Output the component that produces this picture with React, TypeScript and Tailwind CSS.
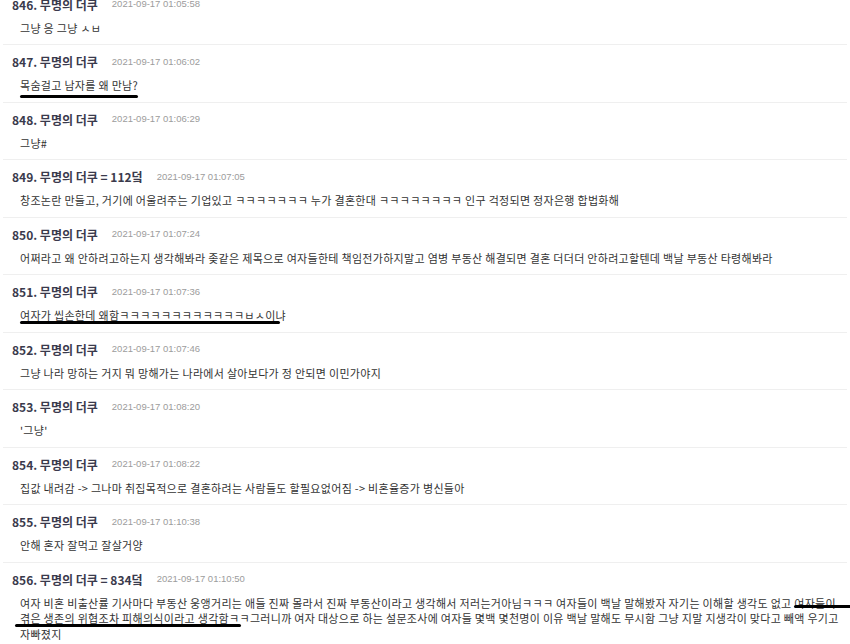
import React from 'react'

type Mark = { text: string; className: string }
type Part = string | Mark

type Comment = {
  no: number
  points?: string
  date: string
  lines: Part[][]
}

const comments: Comment[] = [
  { no: 846, date: '2021-09-17 01:05:58', lines: [['그냥 응 그냥 ㅅㅂ']] },
  {
    no: 847,
    date: '2021-09-17 01:06:02',
    lines: [[{ text: '목숨걸고 남자를 왜 만남?', className: 'left-0 right-0 top-[calc(100%+2px)]' }]],
  },
  { no: 848, date: '2021-09-17 01:06:29', lines: [['그냥#']] },
  {
    no: 849,
    points: '112',
    date: '2021-09-17 01:07:05',
    lines: [['창조논란 만들고, 거기에 어울려주는 기업있고 ㅋㅋㅋㅋㅋㅋㅋ 누가 결혼한대 ㅋㅋㅋㅋㅋㅋㅋㅋ 인구 걱정되면 정자은행 합법화해']],
  },
  {
    no: 850,
    date: '2021-09-17 01:07:24',
    lines: [['어쩌라고 왜 안하려고하는지 생각해봐라 좆같은 제목으로 여자들한테 책임전가하지말고 염병 부동산 해결되면 결혼 더더더 안하려고할텐데 백날 부동산 타령해봐라']],
  },
  {
    no: 851,
    date: '2021-09-17 01:07:36',
    lines: [[{ text: '여자가 씹손한데 왜함ㅋㅋㅋㅋㅋㅋㅋㅋㅋㅋㅋㅋㅂㅅ이냐', className: 'left-0 right-[6px] top-[calc(100%-2px)]' }]],
  },
  {
    no: 852,
    date: '2021-09-17 01:07:46',
    lines: [['그냥 나라 망하는 거지 뭐 망해가는 나라에서 살아보다가 정 안되면 이민가야지']],
  },
  { no: 853, date: '2021-09-17 01:08:20', lines: [["'그냥'"]] },
  {
    no: 854,
    date: '2021-09-17 01:08:22',
    lines: [['집값 내려감 -> 그나마 취집목적으로 결혼하려는 사람들도 할필요없어짐 -> 비혼율증가 병신들아']],
  },
  { no: 855, date: '2021-09-17 01:10:38', lines: [['안해 혼자 잘먹고 잘살거양']] },
  {
    no: 856,
    points: '834',
    date: '2021-09-17 01:10:50',
    lines: [
      [
        '여자 비혼 비출산률 기사마다 부동산 웅앵거리는 애들 진짜 몰라서 진짜 부동산이라고 생각해서 저러는거아님ㅋㅋㅋ 여자들이 백날 말해봤자 자기는 이해할 생각도 없고 ',
        { text: '여자들이', className: 'left-0 right-[-30px] top-[calc(100%-6px)]' },
      ],
      [
        { text: '겪은 생존의 위협조차 피해의식이라고 생각함ㅋ', className: 'left-[-5px] right-[-2px] top-[calc(100%-2px)]' },
        'ㅋ그러니까 여자 대상으로 하는 설문조사에 여자들 몇백 몇천명이 이유 백날 말해도 무시함 그냥 지말 지생각이 맞다고 빼액 우기고',
      ],
      ['자빠졌지'],
    ],
  },
]

function Line({ parts }: { parts: Part[] }) {
  return (
    <div className="whitespace-pre leading-[15.5px]">
      {parts.map((p, i) =>
        typeof p === 'string' ? (
          <span key={i}>{p}</span>
        ) : (
          <span key={i} className="relative">
            {p.text}
            <span className={`absolute h-[3px] rounded-full bg-black ${p.className}`} />
          </span>
        )
      )}
    </div>
  )
}

function CommentItem({ c }: { c: Comment }) {
  return (
    <div className="border-b border-[#efefef] pl-[9px] pt-[10px] pb-[8px]">
      <div className="flex items-center h-[14px]">
        <span className="text-[12px] font-bold text-[#3a3a4c]">
          {c.no}. 무명의 더쿠{c.points && ` = ${c.points}덬`}
        </span>
        <span className="ml-[14px] text-[9.5px] text-[#9c9c9c] font-['Liberation_Sans',sans-serif]">{c.date}</span>
      </div>
      <div className="mt-[9px] ml-[8px] text-[11px] tracking-[0.3px] text-[#333]">
        {c.lines.map((l, i) => (
          <Line key={i} parts={l} />
        ))}
      </div>
    </div>
  )
}

export default function App() {
  return (
    <div className="w-[850px] h-[644px] overflow-hidden bg-white font-['Noto_Sans_CJK_KR','Noto_Sans',sans-serif]">
      <div className="-mt-[12.5px] px-[3px]">
        {comments.map((c) => (
          <CommentItem key={c.no} c={c} />
        ))}
      </div>
    </div>
  )
}
